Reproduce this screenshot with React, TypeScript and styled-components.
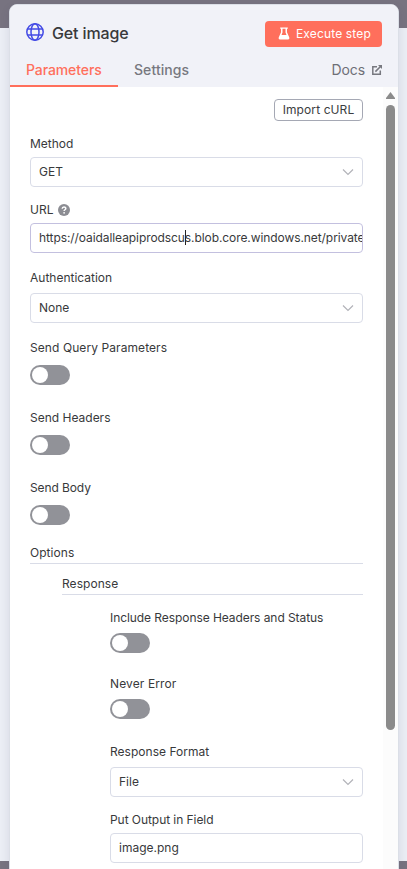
import React from 'react';
import styled, { createGlobalStyle, css } from 'styled-components';

const GlobalStyle = createGlobalStyle`
  * { box-sizing: border-box; }
  html, body { margin: 0; padding: 0; overflow: hidden; }
  body { font-family: Inter, "Liberation Sans", sans-serif; color: #38393b; }
`;

const Backdrop = styled.div`
  height: 869px;
  width: 407px;
  overflow: hidden;
  padding: 4px 8px 0 9px;
  background: linear-gradient(#777380 0 28px, #ebeef5 28px 861px, #777380 861px);
`;

const Panel = styled.section`
  height: 880px;
  display: flex;
  flex-direction: column;
  overflow: hidden;
  background: #fff;
  border: 1px solid #dbdfe7;
  border-radius: 8px;
  box-shadow: 0 4px 10px rgba(60, 60, 90, 0.12);
`;

const Header = styled.header`
  height: 82px;
  flex: none;
  background: #f1f2f8;
`;

const TitleRow = styled.div`
  height: 47px;
  display: flex;
  align-items: center;
  padding: 10px 16px 0 16px;
`;

const Title = styled.h1`
  flex: 1;
  margin: 0 0 2px 8px;
  font-size: 16px;
  line-height: 20px;
  font-weight: 500;
  letter-spacing: -0.12px;
`;

const ExecuteButton = styled.button`
  width: 117px;
  height: 26px;
  display: flex;
  align-items: center;
  padding: 0 0 0 13px;
  gap: 6px;
  border: 0;
  border-radius: 4px;
  background: #ff6f5c;
  color: #fff;
  font: 400 12px/16px Inter, sans-serif;
  letter-spacing: 0.15px;
  white-space: nowrap;
`;

const Tabs = styled.nav`
  height: 35px;
  display: flex;
  align-items: stretch;
  font-size: 14px;
  line-height: 35px;
  font-weight: 500;
`;

const Tab = styled.a<{ $active?: boolean }>`
  padding: 0 16px;
  color: ${p => (p.$active ? '#ff6f5c' : '#77787f')};
  border-bottom: 2px solid ${p => (p.$active ? '#ff6f5c' : 'transparent')};
  ${p => p.$active
    ? css`width: 108px; letter-spacing: -0.1px;`
    : css`letter-spacing: 0.08px;`}
`;

const DocsLink = styled.a`
  margin-left: auto;
  padding-right: 16px;
  display: flex;
  align-items: center;
  gap: 7px;
  color: #6e6f76;
  font-weight: 400;
  letter-spacing: -0.1px;
`;

const Body = styled.div`
  flex: 1;
  display: flex;
`;

const Form = styled.form`
  flex: 1;
  min-width: 0;
  padding: 12px 20px 0;
`;

const Scrollbar = styled.div`
  width: 15px;
  display: flex;
  flex-direction: column;
  align-items: center;
  background: #fcfcfc;
`;

const ArrowUp = styled.svg`
  display: block;
  margin: 5px 0 6px;
`;

const Thumb = styled.div`
  width: 9px;
  height: 625px;
  border-radius: 5px;
  background: #8b8b8b;
`;

const ImportButton = styled.button`
  display: block;
  width: 89px;
  height: 22px;
  margin: 0 0 0 auto;
  padding: 0;
  border: 1px solid #a5a8b4;
  border-radius: 4px;
  background: #fff;
  color: #3c3d41;
  font: 400 12px/18px Inter, sans-serif;
  letter-spacing: 0.1px;
`;

const Field = styled.div<{ $top: number }>`
  padding-top: ${p => p.$top}px;
`;

const Label = styled.label<{ $gap: number; $spacing?: number }>`
  display: flex;
  align-items: center;
  gap: 5px;
  height: 16px;
  margin-bottom: ${p => p.$gap}px;
  font-size: 12px;
  line-height: 16px;
  letter-spacing: ${p => p.$spacing ?? 0}px;
  white-space: nowrap;
`;

const Control = styled.div<{ $focused?: boolean }>`
  height: 30px;
  display: flex;
  align-items: center;
  justify-content: space-between;
  padding: 0 0 0 8px;
  overflow: hidden;
  border: 1px solid ${p => (p.$focused ? '#c3c0df' : '#d9dce7')};
  border-radius: 4px;
  background: #fff;
  font-size: 12px;
  line-height: 16px;
  white-space: nowrap;
`;

const Chevron = styled.svg`
  flex: none;
  margin-right: 8px;
`;

const Value = styled.span<{ $spacing?: number }>`
  letter-spacing: ${p => p.$spacing ?? 0}px;
`;

const Caret = styled.span`
  display: inline-block;
  width: 1px;
  height: 15px;
  margin: 0 -1px 0 0;
  vertical-align: -3px;
  background: #222;
`;

const Toggle = styled.div`
  width: 40px;
  height: 20px;
  padding: 2px;
  border-radius: 10px;
  background: #919298;
  &::before {
    content: '';
    display: block;
    width: 16px;
    height: 16px;
    border-radius: 50%;
    background: #fff;
  }
`;

const SectionTitle = styled.div<{ $top: number; $indent?: number }>`
  height: 19px;
  margin: ${p => p.$top}px 0 0 ${p => p.$indent ?? 0}px;
  border-bottom: 1px solid #d9dce7;
  font-size: 12px;
  line-height: 16px;
  font-weight: 400;
  letter-spacing: 0.05px;
`;

const Nested = styled.div`
  margin-left: 80px;
`;

const GlobeSvg = styled.svg`
  flex: none;
  margin-bottom: 4px;
`;

const GlobeIcon = () => (
  <GlobeSvg width="18" height="18" viewBox="0 0 18 18" fill="none" stroke="#444be5" strokeWidth="1.5">
    <circle cx="9" cy="9" r="8.2" />
    <ellipse cx="9" cy="9" rx="4" ry="8.2" />
    <path d="M1.500 6h15M1.500 12h15" />
  </GlobeSvg>
);

const FlaskIcon = () => (
  <svg width="12" height="13" viewBox="0 0 12 13">
    <path d="M2.200.500h7.600v1.300H9v3.400l2.300 5.400q.500 1.900-1.200 1.900H1.900Q.200 12.500.700 10.600L3 5.200V1.800h-.800z" fill="#fff" />
    <path d="M4.500 1.800h3v3.700l1 2.400h-5l1-2.400z" fill="#ff6f5c" />
  </svg>
);

const ExternalIcon = () => (
  <svg width="10" height="10" viewBox="0 0 10 10" fill="none" stroke="#77787f" strokeWidth="1.500">
    <path d="M5 1.700H.8v7.500h7.500V5.400M3.400 6.600 8.500 1.500" />
    <path d="M6 0h4v4z" fill="#77787f" stroke="none" />
  </svg>
);

const HelpIcon = () => (
  <svg width="12" height="12" viewBox="0 0 12 12" fill="none">
    <circle cx="6" cy="6" r="6" fill="#8c8d93" />
    <path d="M4.200 4.700C4.300 2.300 7.800 2.400 7.800 4.500 7.800 5.800 6.100 5.700 6.100 7" stroke="#fff" strokeWidth="1.500" />
    <circle cx="6.100" cy="8.800" r=".9" fill="#fff" />
  </svg>
);

const Select = ({ value }: { value: string }) => (
  <Control>
    <Value>{value}</Value>
    <Chevron width="12" height="8" viewBox="0 0 12 8" fill="none" stroke="#b2b3b9" strokeWidth="1.200">
      <path d="m1 1.500 5 5 5-5" />
    </Chevron>
  </Control>
);

type ToggleFieldProps = { label: string; top: number; gap?: number; spacing?: number };

const ToggleField = ({ label, top, gap = 9, spacing }: ToggleFieldProps) => (
  <Field $top={top}>
    <Label $gap={gap} $spacing={spacing}>{label}</Label>
    <Toggle role="switch" aria-checked={false} />
  </Field>
);

export default function App() {
  return (
    <Backdrop>
      <GlobalStyle />
      <Panel>
        <Header>
          <TitleRow>
            <GlobeIcon />
            <Title>Get image</Title>
            <ExecuteButton><FlaskIcon />Execute step</ExecuteButton>
          </TitleRow>
          <Tabs>
            <Tab $active>Parameters</Tab>
            <Tab>Settings</Tab>
            <DocsLink>Docs <ExternalIcon /></DocsLink>
          </Tabs>
        </Header>
        <Body>
          <Form>
            <ImportButton type="button">Import cURL</ImportButton>
            <Field $top={15}>
              <Label $gap={5}>Method</Label>
              <Select value="GET" />
            </Field>
            <Field $top={15}>
              <Label $gap={5}>URL <HelpIcon /></Label>
              <Control $focused>
                <Value $spacing={-0.08}>https://oaidalleapiprodscu<Caret />s.blob.core.windows.net/private</Value>
              </Control>
            </Field>
            <Field $top={17}>
              <Label $gap={7}>Authentication</Label>
              <Select value="None" />
            </Field>
            <ToggleField label="Send Query Parameters" top={17} spacing={0.08} />
            <ToggleField label="Send Headers" top={25} />
            <ToggleField label="Send Body" top={25} spacing={-0.1} />
            <SectionTitle $top={20}>Options</SectionTitle>
            <SectionTitle $top={12} $indent={32}>Response</SectionTitle>
            <Nested>
              <ToggleField label="Include Response Headers and Status" top={15} gap={7} spacing={-0.07} />
              <ToggleField label="Never Error" top={23} gap={7} spacing={0.12} />
              <Field $top={25}>
                <Label $gap={7} $spacing={0.02}>Response Format</Label>
                <Select value="File" />
              </Field>
              <Field $top={15}>
                <Label $gap={5} $spacing={-0.06}>Put Output in Field</Label>
                <Control><Value>image.png</Value></Control>
              </Field>
            </Nested>
          </Form>
          <Scrollbar>
            <ArrowUp width="9" height="7" viewBox="0 0 9 7"><path d="M4.500 0 9 6v1H0V6z" fill="#8b8b8b" /></ArrowUp>
            <Thumb />
          </Scrollbar>
        </Body>
      </Panel>
    </Backdrop>
  );
}
